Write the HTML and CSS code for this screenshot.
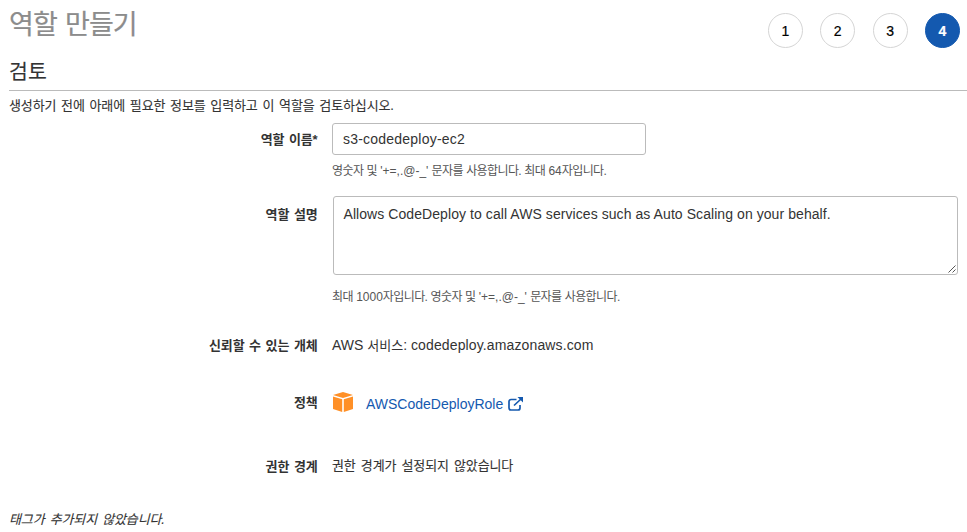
FILE: index.html
```html
<!DOCTYPE html>
<html lang="ko">
<head>
<meta charset="utf-8">
<title>역할 만들기</title>
<link rel="stylesheet" href="styles.css">
</head>
<body>
<header class="top">
  <h1>역할 만들기</h1>
  <ol class="steps"><li>1</li><li>2</li><li>3</li><li class="active">4</li></ol>
</header>
<main>
  <h2>검토</h2>
  <p class="intro">생성하기 전에 아래에 필요한 정보를 입력하고 이 역할을 검토하십시오.</p>
  <form class="form">
    <div class="row name"><label for="role-name">역할 이름*</label><div class="field"><input id="role-name" class="input" value="s3-codedeploy-ec2"><p class="hint">영숫자 및 <span class="latin">'+=,.@-_'</span> 문자를 사용합니다. 최대 <span class="latin">64</span>자입니다.</p></div></div>
    <div class="row desc"><label>역할 설명</label><div class="field"><div class="area"><span>Allows CodeDeploy to call AWS services such as Auto Scaling on your behalf.</span><svg class="grip" viewBox="0 0 10 10"><path d="M1.500 8.500 8.500 1.500M5.500 8.500 8.500 5.500"/></svg></div><p class="hint">최대 <span class="latin">1000</span>자입니다. 영숫자 및 <span class="latin">'+=,.@-_'</span> 문자를 사용합니다.</p></div></div>
    <div class="row trust"><label>신뢰할 수 있는 개체</label><div class="field">AWS <span class="service">서비스</span>: <span class="domain">codedeploy.amazonaws.com</span></div></div>
    <div class="row policy"><label>정책</label><div class="field policy-value">
      <svg class="box" viewBox="0 0 20 20"><path d="M0 3 10 0l10 3L10 6zM0 4.500l9.200 2.700V20L0 17zM20 4.500l-9.200 2.700V20L20 17z"/></svg>
      <a>AWSCodeDeployRole</a>
      <svg class="external" viewBox="0 0 16 14"><path d="M8.500 2.500H3A2 2 0 0 0 1 4.500v6.500a2 2 0 0 0 2 2h7a2 2 0 0 0 2-2V8M6 8.500 13 2"/><path class="head" d="M9.500 0H15v5.500z"/></svg>
    </div></div>
    <div class="row boundary"><label>권한 경계</label><div class="field korean">권한 경계가 설정되지 않았습니다</div></div>
  </form>
  <p class="tags korean">태그가 추가되지 않았습니다.</p>
</main>
</body>
</html>
```
FILE: styles.css
```css
* { box-sizing: border-box; }
body { margin: 0; height: 532px; overflow: hidden; background: #fff; color: #333; font: 14px/20px "Liberation Sans", "Noto Sans CJK KR", sans-serif; }
h1, h2, p, ol { margin: 0; padding: 0; font-weight: 400; }
.top { display: flex; justify-content: space-between; height: 58px; padding: 0 7px 0 9px; }
h1 { margin-top: 6px; font-size: 27px; line-height: 38px; color: #8c8c8c; letter-spacing: -.9px; word-spacing: 1.5px; -webkit-text-stroke: .2px #8c8c8c; }
.steps { display: flex; gap: 17.4px; margin-top: 13px; list-style: none; }
.steps li { width: 35px; height: 35px; border: 1px solid #d5d5d5; border-radius: 50%; text-align: center; line-height: 34px; color: #000; -webkit-text-stroke: .2px currentColor; }
.steps .active { background: #1459af; border-color: #1459af; color: #fff; font-weight: 700; }
h2 { height: 33px; margin-left: 9px; border-bottom: 1px solid #bbb; font-size: 20.5px; line-height: 28px; letter-spacing: .2px; -webkit-text-stroke: .1px #333; }
.korean, .intro { font-size: 13px; letter-spacing: -.13px; word-spacing: 1.7px; -webkit-text-stroke: .1px #333; }
.intro { margin: 5px 0 0 9px; word-spacing: 1.3px; }
.row { display: grid; grid-template-columns: 317.5px 626px; column-gap: 14.5px; }
label { padding-top: 1px; text-align: right; font-weight: 700; font-size: 13px; letter-spacing: -.15px; word-spacing: 1.2px; }
.name { height: 73px; margin-top: 7px; }
.name label { padding-top: 7px; }
.input { display: block; width: 314px; height: 32px; border: 1px solid #bbb; border-radius: 3px; padding: 0 10px; color: #333; background: #fff; font: inherit; letter-spacing: .22px; outline: 0; }
.hint { margin-top: 6px; font-size: 12px; color: #555; letter-spacing: -.6px; word-spacing: .5px; }
.latin { letter-spacing: 0; }
.desc { height: 139px; }
.desc label { padding-top: 9px; }
.area { position: relative; height: 79px; margin-left: 1px; border: 1px solid #bbb; border-radius: 3px; padding: 7px 9.5px; letter-spacing: .07px; }
.area + .hint { margin: 12px 0 0; }
.grip { position: absolute; right: 0; bottom: 0; width: 10px; height: 10px; fill: none; stroke: #555; }
.trust { height: 57px; }
.service { font-size: 13px; }
.domain { letter-spacing: .13px; }
.policy { height: 64px; }
.policy-value { display: flex; align-items: flex-start; color: #1459af; }
.policy-value a { margin-top: 2px; }
.box { width: 20px; height: 20px; fill: #ff9027; margin: 0 13px 0 1px; }
.external { width: 16px; height: 14px; margin: 5px 0 0 5px; fill: none; stroke: currentColor; stroke-width: 1.7; }
.head { fill: currentColor; stroke: none; }
.boundary { height: 54px; }
.tags { margin-left: 9px; font-style: italic; }
```
